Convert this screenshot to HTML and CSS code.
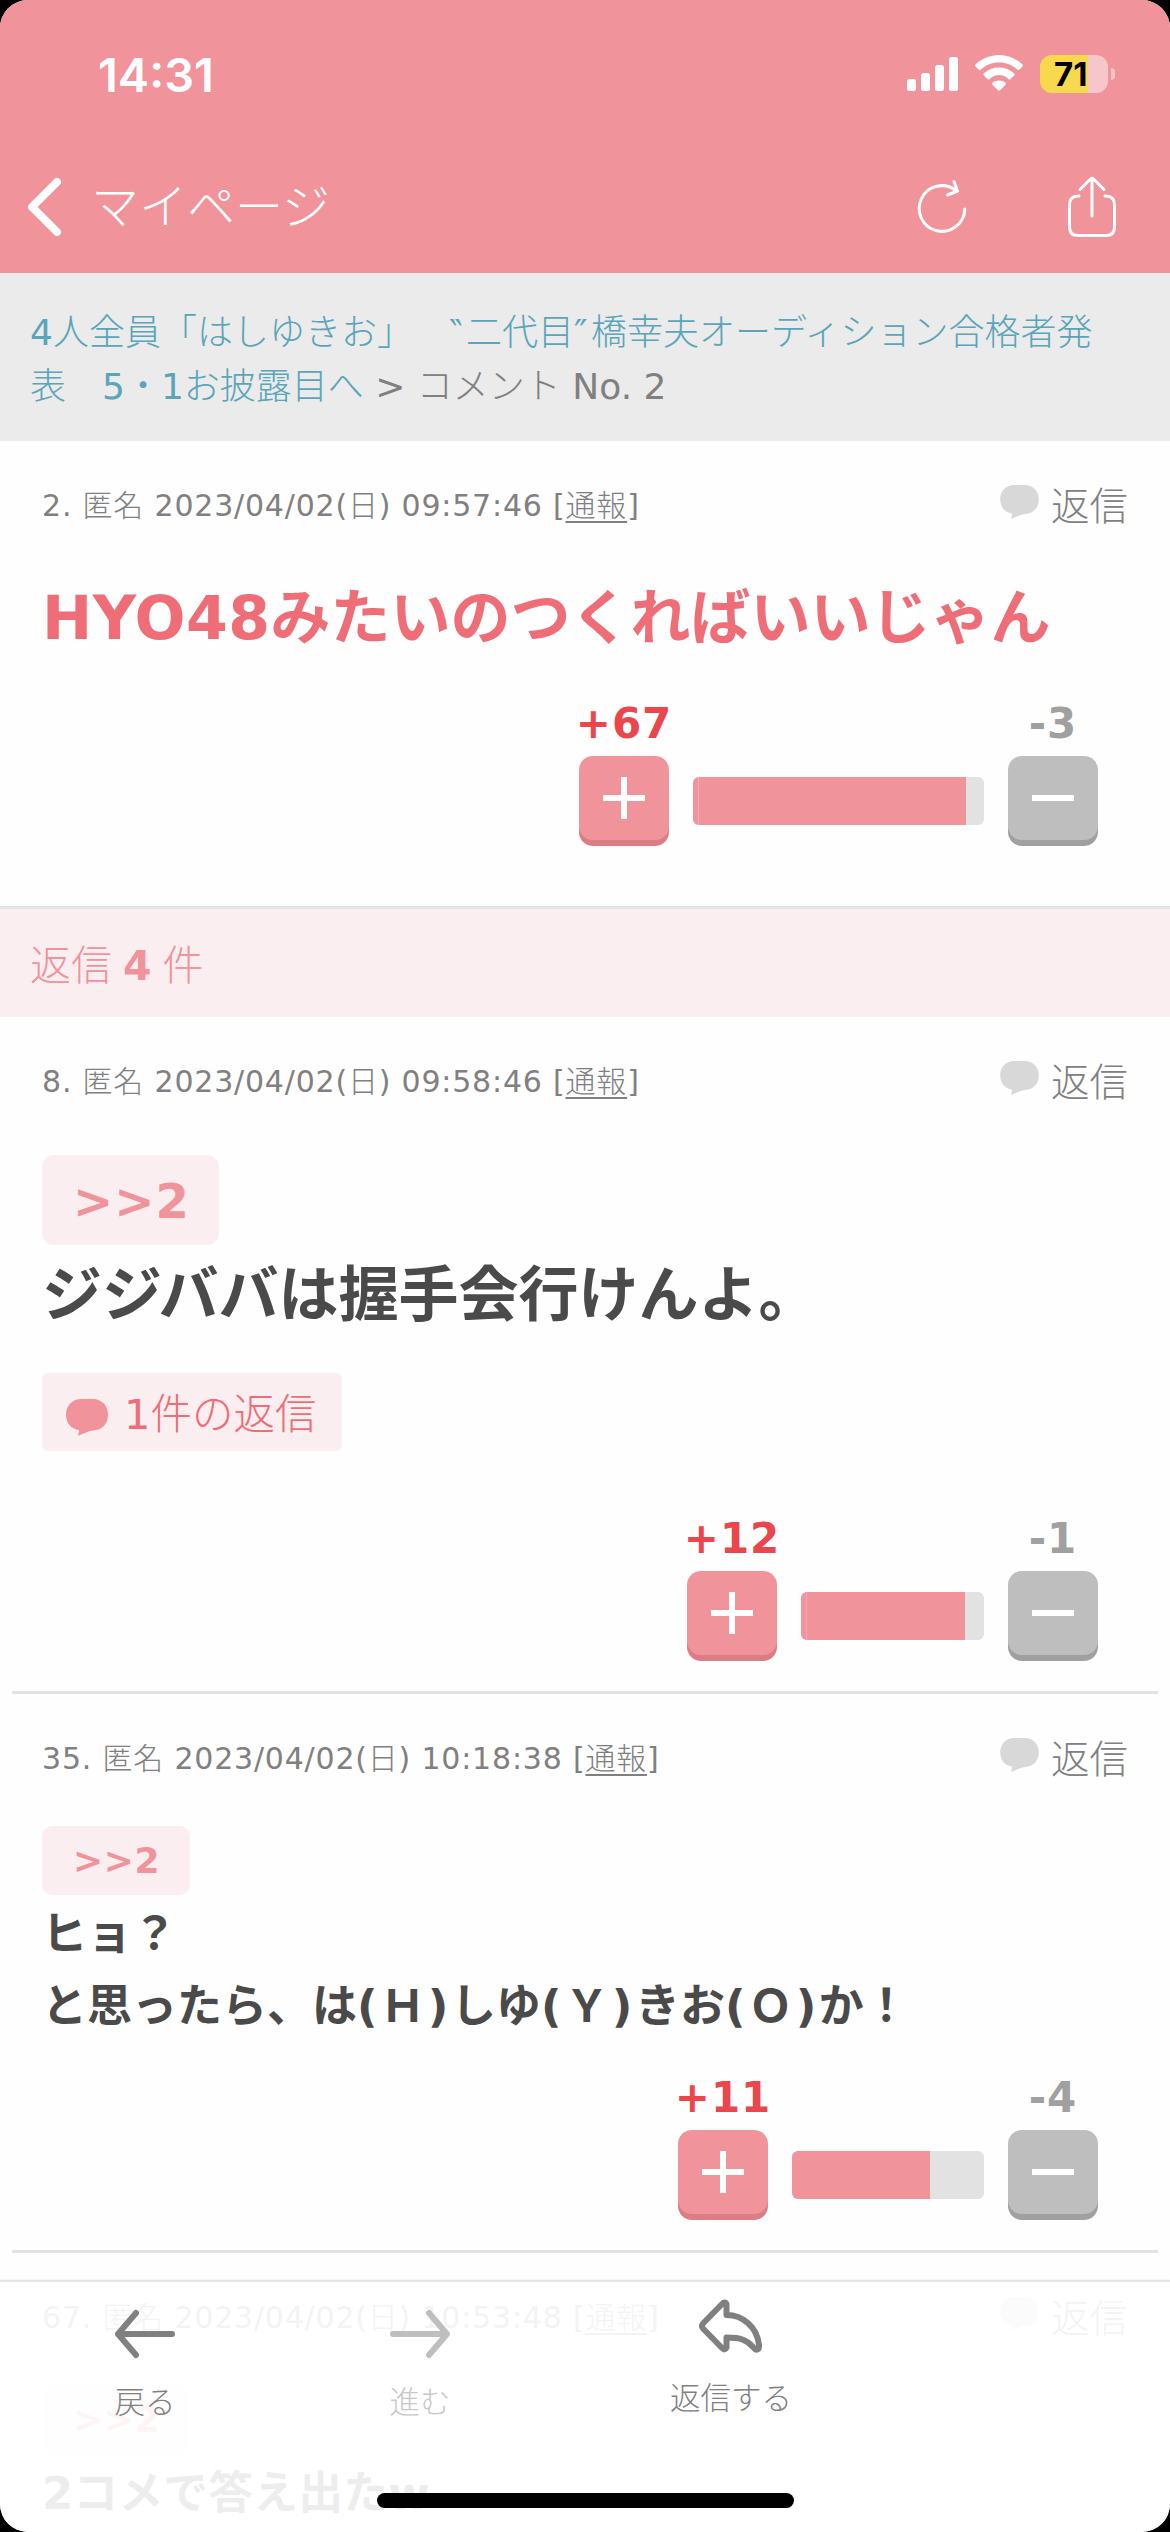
FILE: index.html
```html
<!DOCTYPE html>
<html lang="ja">
<head>
<meta charset="utf-8">
<title>コメント No. 2</title>
<link rel="stylesheet" href="styles.css">
</head>
<body>
<svg class="defs" width="0" height="0" aria-hidden="true">
  <symbol id="bubble" viewBox="0 0 42 37"><path d="M15 0H27C36 0 42 7 42 15.500C42 25 36 31 27 31.500C22 32 17 35 12 37L13 31C5 30 0 24 0 15.500C0 6 7 0 15 0Z"/></symbol>
</svg>
<div class="screen">
  <header class="header">
    <div class="status">
      <span class="clock">14:31</span>
      <svg class="signal" width="51" height="34" viewBox="0 0 51 34"><rect y="22" width="9" height="12" rx="2.500"/><rect x="14" y="16" width="9" height="18" rx="2.500"/><rect x="28" y="8" width="9" height="26" rx="2.500"/><rect x="42" width="9" height="34" rx="2.500"/></svg>
      <svg class="wifi" width="48" height="36" viewBox="0 0 48 36"><path d="M24 0C33 0 41 3.500 47.300 9.300Q48.500 10.500 47.300 11.700L44.500 14.500Q43.400 15.500 42.300 14.500C37 10 31 7.500 24 7.500S11 10 5.700 14.500Q4.600 15.500 3.500 14.500L.700 11.700Q-.500 10.500 .700 9.300C7 3.500 15 0 24 0ZM24 12.500C30 12.500 34.500 14.500 39 18.300Q40.200 19.400 39 20.600L35.500 24Q34.500 25 33.300 24C30.500 21.500 27.500 20 24 20S17.500 21.500 14.700 24Q13.500 25 12.500 24L9 20.600Q7.800 19.400 9 18.300C13.500 14.500 18 12.500 24 12.500ZM24 25.500C26.500 25.500 28.700 26.300 30.500 27.700Q31.500 28.600 30.500 29.700L25 35.300Q24 36.300 23 35.300L17.500 29.700Q16.500 28.600 17.500 27.700C19.300 26.300 21.500 25.500 24 25.500Z"/></svg>
      <span class="battery">71</span>
      <span class="nub"></span>
    </div>
    <nav class="nav">
      <svg class="back" width="40" height="64" viewBox="0 0 40 64"><path d="M33 7L8 32L33 57"/></svg>
      <h1 class="title">マイページ</h1>
      <svg class="action" width="54" height="64" viewBox="915 174 54 64"><path d="M964.800 208A22.800 22.800 0 1 1 956 189.500M954 180.500L957.500 190L947.500 194"/></svg>
      <svg class="action" width="54" height="64" viewBox="1065 174 54 64"><path d="M1079 195H1078Q1069.500 195 1069.500 204V226Q1069.500 234.500 1078 234.500H1106Q1114.500 234.500 1114.500 226V204Q1114.500 195 1106 195H1105M1092 215V178M1080 188.500L1090.500 178Q1092 176.500 1093.500 178L1104 188.500"/></svg>
    </nav>
  </header>

  <div class="crumbs"><a>4人全員「はしゆきお」　<span class="prime">‶</span>二代目<span class="prime">″</span>橋幸夫オーディション合格者発<br>表　5・1お披露目へ</a> &gt; コメント No. 2</div>

  <main>
    <article class="comment lead">
      <div class="meta"><span class="by">2. 匿名 2023/04/02(日) 09:57:46 [<u>通報</u>]</span><span class="reply"><svg><use href="#bubble"/></svg>返信</span></div>
      <p class="text large hot"><span class="latin">HYO48</span>みたいのつくればいいじゃん</p>
      <div class="votes">
        <div class="vote"><span class="count up">+67</span><span class="btn plus"></span></div>
        <div class="bar" style="width:291px"><i style="width:273px"></i></div>
        <div class="vote"><span class="count">-3</span><span class="btn minus"></span></div>
      </div>
    </article>

    <h2 class="section">返信 <b>4</b> 件</h2>

    <article class="comment second">
      <div class="meta"><span class="by">8. 匿名 2023/04/02(日) 09:58:46 [<u>通報</u>]</span><span class="reply"><svg><use href="#bubble"/></svg>返信</span></div>
      <a class="anchor big">&gt;&gt;2</a>
      <p class="text large">ジジババは握手会行けんよ。</p>
      <a class="thread"><svg><use href="#bubble"/></svg>1<span class="thin">件の返信</span></a>
      <div class="votes">
        <div class="vote"><span class="count up">+12</span><span class="btn plus"></span></div>
        <div class="bar" style="width:183px"><i style="width:164px"></i></div>
        <div class="vote"><span class="count">-1</span><span class="btn minus"></span></div>
      </div>
    </article>
    <hr>
    <article class="comment third">
      <div class="meta"><span class="by">35. 匿名 2023/04/02(日) 10:18:38 [<u>通報</u>]</span><span class="reply"><svg><use href="#bubble"/></svg>返信</span></div>
      <a class="anchor">&gt;&gt;2</a>
      <p class="text">ヒョ？<br>と思ったら、は<span class="paren">(Ｈ)</span>しゆ<span class="paren">(Ｙ)</span>きお<span class="paren">(Ｏ)</span>か！</p>
      <div class="votes">
        <div class="vote"><span class="count up">+11</span><span class="btn plus"></span></div>
        <div class="bar solid" style="width:192px"><i style="width:138px"></i></div>
        <div class="vote"><span class="count">-4</span><span class="btn minus"></span></div>
      </div>
    </article>
    <hr>
    <article class="comment">
      <div class="meta"><span class="by">67. 匿名 2023/04/02(日) 10:53:48 [<u>通報</u>]</span><span class="reply"><svg><use href="#bubble"/></svg>返信</span></div>
      <a class="anchor">&gt;&gt;2</a>
      <p class="text">2コメで答え出たw</p>
    </article>
  </main>

  <footer class="toolbar">
    <a class="tool"><svg width="64" height="56" viewBox="113 2306 64 56"><path d="M172 2334H118M136 2313L118 2334L136 2355"/></svg>戻る</a>
    <a class="tool off"><svg width="64" height="56" viewBox="387 2306 64 56"><path d="M392 2334H446M428 2313L446 2334L428 2355"/></svg>進む</a>
    <a class="tool wide"><svg width="70" height="60" viewBox="695 2296 70 60"><path d="M721 2304Q724 2301 725.500 2304V2315C742 2315 756 2327 758 2345C758.500 2350 755 2351 752.500 2347.500C746 2340 740 2337.500 725.500 2337.500V2347.500Q724 2351 721 2348L702 2328.500Q700 2326 702 2323.500Z"/></svg>返信する</a>
    <span class="home"></span>
  </footer>
</div>
</body>
</html>
```
FILE: styles.css
```css
* { box-sizing: border-box; }
body {
  margin: 0;
  background: #000;
  font-family: "DejaVu Sans", "Noto Sans CJK JP Light", "Noto Sans CJK JP", sans-serif;
  text-spacing-trim: space-all;
  color: #808080;
}
h1, h2, p { margin: 0; font-weight: 400; }
.defs { position: absolute; }
.screen {
  position: relative;
  width: 1170px;
  height: 2532px;
  overflow: hidden;
  background: #fefefe;
  border-radius: 28px;
}

/* header */
.header { height: 273px; background: #f0939a; color: #fff; fill: #fff; }
.status { display: flex; align-items: flex-start; height: 150px; padding: 55px 55px 0 98px; }
.clock { flex: 1; font: 600 47px/39px Inter, sans-serif; }
.signal { margin-top: 2px; }
.wifi { margin-left: 17px; }
.battery {
  width: 68px;
  height: 38px;
  margin-left: 17px;
  padding-left: 14px;
  border-radius: 12px;
  background: linear-gradient(90deg, #f8d84c 48px, #f6c6ca 48px);
  color: #000;
  font: 700 33px/38px Inter, sans-serif;
}
.nub { width: 4px; height: 12px; margin: 13px 0 0 3px; border-radius: 0 6px 6px 0; background: #f6c6ca; }
.nav { display: flex; align-items: center; height: 114px; padding: 0 51px 0 24px; fill: none; stroke: #fff; stroke-linecap: round; stroke-linejoin: round; }
.back { stroke-width: 8px; }
.title { flex: 1; padding: 0 0 8px 27px; font-size: 48px; font-weight: 300; font-family: "Noto Sans CJK JP", sans-serif; }
.action { stroke-width: 3px; }
.action + .action { margin-left: 96px; }

.crumbs { height: 168px; padding: 33px 30px 0; background: #ebebeb; font-size: 36px; line-height: 54px; white-space: nowrap; }
.crumbs a { color: #5aa5b9; }
.prime { display: inline-block; width: 17px; }

/* comments */
.comment { padding: 34px 42px 0; }
.lead { padding-bottom: 60px; }
.second, .third { padding-bottom: 30px; }
.meta { display: flex; justify-content: space-between; height: 60px; font-size: 30px; line-height: 61px; }
.by { letter-spacing: .8px; white-space: nowrap; }
.by u { text-underline-offset: 5px; text-decoration-thickness: 2px; }
.reply { display: flex; font-size: 38.500px; font-weight: 300; line-height: 56px; font-family: "Noto Sans CJK JP", sans-serif; }
.reply svg { width: 39px; height: 34px; margin: 10px 12px 0 0; fill: #d8d8d8; }
.text { color: #4a4a4a; font-family: "DejaVu Sans", "Noto Sans CJK JP", sans-serif; font-size: 45px; line-height: 72px; height: 72px; padding-top: 2px; font-weight: 700; white-space: nowrap; }
.third .text { height: 144px; }
.text.large { font-size: 60px; line-height: 96px; height: 96px; padding-top: 1px; }
.text.hot { margin-top: 34px; color: #ee6d76; }
.latin { letter-spacing: .5px; }
.paren { letter-spacing: 2.600px; }
.anchor {
  display: block;
  width: 148px;
  height: 69px;
  margin: 38px 0 2px;
  padding-left: 31px;
  border-radius: 10px;
  background: #fbeef1;
  color: #f0939b;
  font-size: 36px;
  font-weight: 700;
  line-height: 69px;
  letter-spacing: .6px;
}
.anchor.big { width: 177px; height: 90px; margin: 44px 0 1px; border-radius: 12px; font-size: 48px; line-height: 92px; letter-spacing: 1px; }
.thread {
  display: flex;
  width: 300px;
  height: 78px;
  margin-top: 31px;
  padding-left: 24px;
  border-radius: 6px;
  background: #fbeef1;
  color: #ee6d76;
  font-size: 41.500px;
  line-height: 84px;
}
.thread svg { width: 42px; height: 37px; margin: 26px 16px 0 0; fill: #f0939b; }
.thin { font-weight: 300; }

.votes { display: flex; justify-content: flex-end; align-items: flex-end; gap: 24px; height: 152px; margin: 29px 30px 0 0; }
.second .votes { margin-top: 58px; }
.third .votes { margin-top: 27px; }
.vote { display: flex; flex-direction: column; align-items: center; width: 90px; height: 152px; }
.count { height: 62px; color: #a0a0a0; font-size: 42px; font-weight: 700; line-height: 59px; letter-spacing: 1px; white-space: nowrap; }
.count.up { color: #eb464b; }
.btn { width: 90px; height: 90px; border-radius: 14px; background: linear-gradient(#fff, #fff) 24px 39px / 42px 6px no-repeat #bebebe; box-shadow: inset 0 -6px #a0a0a0; }
.plus { background: linear-gradient(#fff, #fff) 24px 39px / 42px 6px no-repeat, linear-gradient(#fff, #fff) 42px 21px / 6px 42px no-repeat #f0939b; box-shadow: inset 0 -6px #dc7d85; }
.bar { height: 48px; margin-bottom: 21px; overflow: hidden; border-radius: 6px; background: #e2e2e2; }
.bar i { display: block; height: 48px; background: linear-gradient(90deg, #f0939b 5px, #f4a9b0 5px, #f4a9b0 6px, #f0939b 6px); }
.bar.solid i { background: #f0939b; }

.section { height: 111px; padding-left: 30px; border-top: 3px solid #e5e5e5; background: #fbeef1; color: #f0939b; font-size: 41px; font-weight: 300; line-height: 114px; word-spacing: -2px; }
.section b { font-weight: 700; }
hr { height: 3px; margin: 0 12px; border: 0; background: #e2e2e2; }

/* bottom toolbar over the scrolling list */
.toolbar {
  position: absolute;
  inset: 2280px 0 0;
  display: flex;
  border-top: 2px solid #e6e6e6;
  box-shadow: 0 0 2px #e8e8e8;
  background: rgba(255, 255, 255, .9);
  font-size: 30.500px;
  font-weight: 300;
  line-height: 40px;
}
.tool { display: flex; flex-direction: column; align-items: center; width: 290px; padding-top: 24px; gap: 21px; fill: none; stroke: #808080; stroke-width: 6px; stroke-linecap: round; stroke-linejoin: round; }
.tool.off { width: 260px; color: #c8c8c8; stroke: #bebebe; }
.tool.wide { width: 362px; padding-top: 14px; gap: 23px; }
.home { position: absolute; left: 377px; top: 211px; width: 417px; height: 15px; border-radius: 8px; background: #000; }
```
